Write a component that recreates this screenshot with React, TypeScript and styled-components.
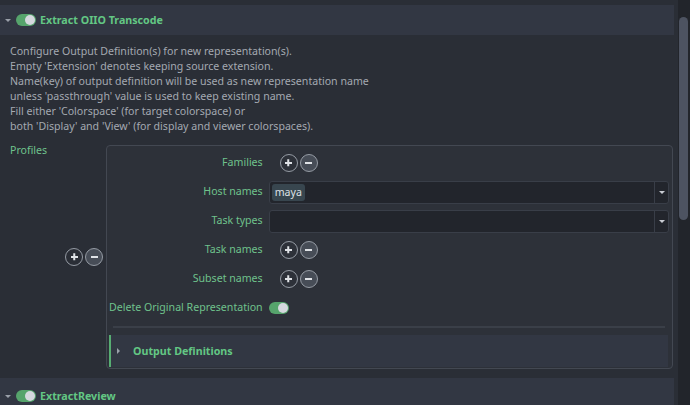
import styled, { createGlobalStyle } from "styled-components";

const GlobalStyle = createGlobalStyle`
  body {
    margin: 0;
    background: #2a2e36;
    font-family: "Noto Sans", "DejaVu Sans", sans-serif;
  }
`;

const Page = styled.div`
  width: 690px;
  height: 405px;
  display: flex;
  overflow: hidden;
  background: #2a2e36;
`;

const Content = styled.div`
  flex: 1;
  padding-top: 5px;
  padding-right: 4px;
  display: flex;
  flex-direction: column;
  min-width: 0;
  overflow: hidden;
`;

const Scrollbar = styled.div`
  width: 12px;
  background: #22252b;
  padding: 17px 2px 0 1px;
  box-sizing: border-box;
`;

const Thumb = styled.div`
  height: 203px;
  border-radius: 5px;
  background: #4d5361;
`;

const SectionHeader = styled.div<{ $tall?: boolean }>`
  height: ${(p) => (p.$tall ? 36 : 30)}px;
  flex-shrink: 0;
  background: #323743;
  display: flex;
  align-items: center;
  padding-left: 5px;
`;

const DownArrow = styled.span`
  width: 0;
  height: 0;
  border-left: 3px solid transparent;
  border-right: 3px solid transparent;
  border-top: 3px solid #9aa0a9;
  margin-right: 5px;
`;

const RightArrow = styled.span`
  width: 0;
  height: 0;
  border-top: 3px solid transparent;
  border-bottom: 3px solid transparent;
  border-left: 3px solid #9aa0a9;
  margin-right: 13px;
`;

const Toggle = styled.span`
  width: 20px;
  height: 12px;
  border-radius: 6px;
  background: #56a46c;
  display: flex;
  align-items: center;
  justify-content: flex-end;
  padding: 0 1px;
  box-sizing: border-box;
  &::after {
    content: "";
    width: 10px;
    height: 10px;
    border-radius: 50%;
    background: #d5d8de;
  }
`;

const Title = styled.span`
  color: #63c784;
  font-weight: 700;
  font-size: 10.7px;
  margin-left: 4px;
`;

const Body = styled.div`
  padding: 9px 1px 9px 10px;
`;

const Description = styled.div`
  color: #a4a9b1;
  font-size: 10.6px;
  line-height: 15px;
`;

const ProfilesRow = styled.div`
  display: flex;
  margin-top: 11px;
`;

const SideLabel = styled.div`
  color: #6fc28c;
  font-size: 10.6px;
  width: 55px;
  margin-top: -2px;
`;

const ListRow = styled.div`
  flex: 1;
  display: flex;
  align-items: center;
  gap: 3px;
`;

const CircleButtons = styled.div`
  display: flex;
  gap: 2px;
`;

const CircleButton = styled.span<{ $filled?: boolean }>`
  position: relative;
  width: 16px;
  height: 16px;
  border-radius: 50%;
  border: 1px solid #959ba4;
  background: ${(p) => (p.$filled ? "#474d57" : "transparent")};
  &::before,
  &::after {
    content: "";
    position: absolute;
    left: 4.5px;
    top: 7.25px;
    width: 7px;
    height: 1.5px;
    background: #dfe2e6;
  }
  &::after {
    display: ${(p) => (p.$filled ? "none" : "block")};
    transform: rotate(90deg);
  }
`;

const Item = styled.div`
  flex: 1;
  border: 1px solid #434852;
  border-radius: 4px;
  background: #2d3139;
  padding: 5px 3px 1px 2px;
`;

const Form = styled.div`
  display: grid;
  grid-template-columns: auto 1fr;
  column-gap: 6px;
  row-gap: 5px;
  align-items: center;
`;

const FieldLabel = styled.div`
  color: #6fc28c;
  font-size: 10.6px;
  text-align: right;
  height: 24px;
  line-height: 22px;
`;

const Buttons = styled.div`
  display: flex;
  gap: 2px;
  padding-left: 11px;
`;

const Combo = styled.div`
  height: 23px;
  box-sizing: border-box;
  border: 1px solid #393e48;
  border-radius: 3px;
  background: #22252c;
  display: flex;
  align-items: stretch;
`;

const ComboText = styled.div`
  flex: 1;
  display: flex;
  align-items: center;
  padding-left: 2px;
`;

const Tag = styled.span`
  background: #38464f;
  color: #dde1e6;
  font-size: 10.6px;
  line-height: 13px;
  border-radius: 3px;
  padding: 2px 3px;
`;

const ComboArrow = styled.div`
  width: 13px;
  border-left: 1px solid #393e48;
  display: flex;
  align-items: center;
  justify-content: center;
  &::after {
    content: "";
    border-left: 3px solid transparent;
    border-right: 3px solid transparent;
    border-top: 3px solid #c9cdd3;
  }
`;

const ToggleCell = styled.div`
  display: flex;
  align-items: center;
`;

const Separator = styled.div`
  height: 2px;
  background: #3a3f48;
  margin: 6px 4px 7px 4px;
`;

const SubSection = styled.div`
  height: 32px;
  background: #323743;
  border-left: 2px solid #57ad72;
  margin-right: 1px;
  display: flex;
  align-items: center;
  padding-left: 6px;
`;

const SubTitle = styled.span`
  color: #63c784;
  font-weight: 700;
  font-size: 10.7px;
`;

const fields: { label: string; kind: "buttons" | "combo"; tags?: string[] }[] = [
  { label: "Families", kind: "buttons" },
  { label: "Host names", kind: "combo", tags: ["maya"] },
  { label: "Task types", kind: "combo", tags: [] },
  { label: "Task names", kind: "buttons" },
  { label: "Subset names", kind: "buttons" },
];

function PlusMinus() {
  return (
    <>
      <CircleButton title="add" />
      <CircleButton $filled title="remove" />
    </>
  );
}

export default function App() {
  return (
    <>
      <GlobalStyle />
      <Page>
        <Content>
          <SectionHeader>
            <DownArrow />
            <Toggle />
            <Title>Extract OIIO Transcode</Title>
          </SectionHeader>
          <Body>
            <Description>
              Configure Output Definition(s) for new representation(s).
              <br />
              Empty 'Extension' denotes keeping source extension.
              <br />
              Name(key) of output definition will be used as new representation name
              <br />
              unless 'passthrough' value is used to keep existing name.
              <br />
              Fill either 'Colorspace' (for target colorspace) or
              <br />
              both 'Display' and 'View' (for display and viewer colorspaces).
            </Description>
            <ProfilesRow>
              <SideLabel>Profiles</SideLabel>
              <ListRow>
                <CircleButtons>
                  <PlusMinus />
                </CircleButtons>
                <Item>
                  <Form>
                    {fields.map((f) => (
                      <>
                        <FieldLabel key={f.label}>{f.label}</FieldLabel>
                        {f.kind === "buttons" ? (
                          <Buttons>
                            <PlusMinus />
                          </Buttons>
                        ) : (
                          <Combo>
                            <ComboText>
                              {f.tags?.map((t) => (
                                <Tag key={t}>{t}</Tag>
                              ))}
                            </ComboText>
                            <ComboArrow />
                          </Combo>
                        )}
                      </>
                    ))}
                    <FieldLabel>Delete Original Representation</FieldLabel>
                    <ToggleCell>
                      <Toggle />
                    </ToggleCell>
                  </Form>
                  <Separator />
                  <SubSection>
                    <RightArrow />
                    <SubTitle>Output Definitions</SubTitle>
                  </SubSection>
                </Item>
              </ListRow>
            </ProfilesRow>
          </Body>
          <SectionHeader $tall>
            <DownArrow />
            <Toggle />
            <Title>ExtractReview</Title>
          </SectionHeader>
        </Content>
        <Scrollbar>
          <Thumb />
        </Scrollbar>
      </Page>
    </>
  );
}
